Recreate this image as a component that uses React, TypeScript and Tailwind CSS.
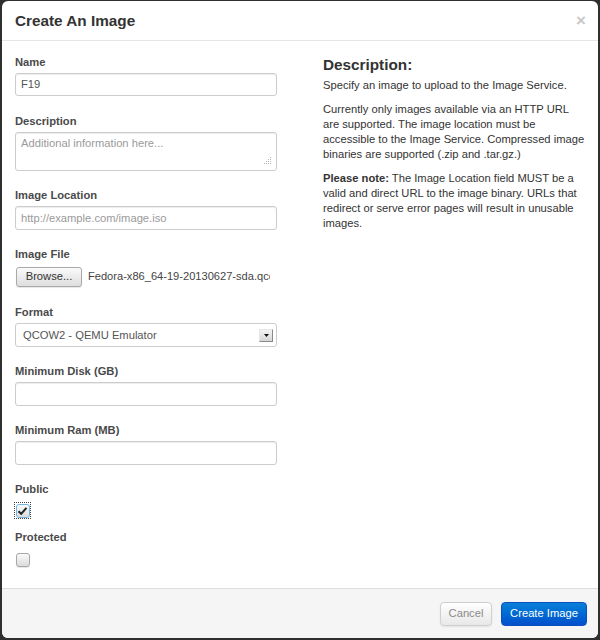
import React from "react";

function Label({ children }: { children: React.ReactNode }) {
  return (
    <div className="text-[11.2px] leading-[15.5px] font-bold text-[#4a4a4a] pt-[1.5px] mb-[2.5px]">
      {children}
    </div>
  );
}

function Input({ value, placeholder }: { value?: string; placeholder?: string }) {
  return (
    <div className="h-[23.5px] w-[262px] border border-[#cccccc] rounded-[3px] bg-white shadow-[inset_0_1px_1px_rgba(0,0,0,0.075)] flex items-center pl-[5px] text-[11.2px]">
      {value ? (
        <span className="text-[#555]">{value}</span>
      ) : placeholder ? (
        <span className="text-[#9a9a9a]">{placeholder}</span>
      ) : null}
    </div>
  );
}

export default function App() {
  return (
    <div className="w-[600px] h-[640px] bg-[#2f2f2f] pt-[1px] px-[2px] pb-[2px] font-['Liberation_Sans',Arial,sans-serif]">
      <div className="h-full flex flex-col bg-white rounded-[6px] overflow-hidden">
        {/* Header */}
        <div className="h-[40px] shrink-0 border-b border-[#e5e5e5] flex items-center justify-between pl-[13px] pr-[12px] pt-[1px]">
          <h3 className="text-[15.3px] leading-[20px] font-bold text-[#333]">Create An Image</h3>
          <span className="text-[17px] font-bold leading-[20px] text-[#c8c8c8]">×</span>
        </div>

        {/* Body */}
        <div className="flex-1 flex pl-[13px] pt-[12.4px]">
          <div className="w-[262px] flex flex-col">
            <Label>Name</Label>
            <Input value="F19" />
            <div className="h-[16px]" />

            <Label>Description</Label>
            <div className="relative h-[39px] w-[262px] border border-[#cccccc] rounded-[3px] bg-white shadow-[inset_0_1px_1px_rgba(0,0,0,0.075)] pl-[5px] pt-[3px] text-[11.2px] leading-[15px]">
              <span className="text-[#9a9a9a]">Additional information here...</span>
              <svg className="absolute right-[4px] bottom-[4px]" width="9" height="9" viewBox="0 0 9 9">
                <g fill="#b5b5b5">
                  <rect x="7" y="0" width="1" height="1" />
                  <rect x="7" y="2" width="1" height="1" />
                  <rect x="5" y="2" width="1" height="1" />
                  <rect x="7" y="4" width="1" height="1" />
                  <rect x="5" y="4" width="1" height="1" />
                  <rect x="3" y="4" width="1" height="1" />
                  <rect x="7" y="6" width="1" height="1" />
                  <rect x="5" y="6" width="1" height="1" />
                  <rect x="3" y="6" width="1" height="1" />
                  <rect x="1" y="6" width="1" height="1" />
                </g>
              </svg>
            </div>
            <div className="h-[16px]" />

            <Label>Image Location</Label>
            <Input placeholder="http://example.com/image.iso" />
            <div className="h-[16px]" />

            <Label>Image File</Label>
            <div className="h-[22.5px] flex items-center">
              <div className="ml-[1px] h-[20px] w-[66px] border border-[#a9a9a9] rounded-[3px] bg-linear-to-b from-[#fafafa] to-[#dedede] shadow-[0_1px_1px_rgba(0,0,0,0.1)] flex items-center justify-center text-[11.2px] text-[#333]">
                Browse...
              </div>
              <div className="ml-[6px] w-[182px] overflow-hidden whitespace-nowrap text-[11.1px] text-[#444]">
                Fedora-x86_64-19-20130627-sda.qcow2
              </div>
            </div>
            <div className="h-[16px]" />

            <Label>Format</Label>
            <div className="h-[23.5px] w-[262px] border border-[#cccccc] rounded-[3px] bg-white flex items-center justify-between pl-[7px] pr-[3px] text-[11.2px]">
              <span className="text-[#555]">QCOW2 - QEMU Emulator</span>
              <div className="h-[13px] w-[14px] bg-linear-to-b from-[#f4f4f4] to-[#d6d6d6] border-r border-b border-[#8a8a8a] border-l border-t border-l-[#e6e6e6] border-t-[#e6e6e6] flex items-center justify-center">
                <svg width="5" height="3" viewBox="0 0 5 3">
                  <path d="M0 0 H5 L2.5 3 Z" fill="#111" />
                </svg>
              </div>
            </div>
            <div className="h-[16px]" />

            <Label>Minimum Disk (GB)</Label>
            <Input />
            <div className="h-[16px]" />

            <Label>Minimum Ram (MB)</Label>
            <Input />
            <div className="h-[16px]" />

            <Label>Public</Label>
            <div className="mt-[2px] ml-[-1px] h-[17px] w-[17px] border border-dotted border-[#444] p-[0.5px]">
              <div className="h-full w-full rounded-[3px] border border-[#6fb3e6] bg-linear-to-b from-[#fafafa] to-[#dcdcdc] flex items-center justify-center">
                <svg width="11" height="10" viewBox="0 0 11 10">
                  <path d="M1.5 5.2 L4.2 7.8 L9.5 1.8" fill="none" stroke="#222" strokeWidth="2" />
                </svg>
              </div>
            </div>

            <div className="mt-[9.5px]">
              <Label>Protected</Label>
            </div>
            <div className="mt-[5px] ml-[1px] h-[14px] w-[14px] rounded-[3px] border border-[#a8a8a8] bg-linear-to-b from-[#fafafa] to-[#dcdcdc] shadow-[0_1px_1px_rgba(0,0,0,0.1)]" />
          </div>

          <div className="ml-[46px] w-[270px] pt-[3px] text-[#333] whitespace-nowrap">
            <h3 className="text-[15.3px] leading-[17px] font-bold mb-[4.8px]">Description:</h3>
            <p className="text-[11.2px] leading-[15px] mb-[9px]">
              Specify an image to upload to the Image Service.
            </p>
            <p className="text-[11.2px] leading-[15px] mb-[8.6px]">
              Currently only images available via an HTTP URL
              <br />
              are supported. The image location must be
              <br />
              accessible to the Image Service. Compressed image
              <br />
              binaries are supported (.zip and .tar.gz.)
            </p>
            <p className="text-[11.2px] leading-[15px]">
              <strong>Please note:</strong> The Image Location field MUST be a
              <br />
              valid and direct URL to the image binary. URLs that
              <br />
              redirect or serve error pages will result in unusable
              <br />
              images.
            </p>
          </div>
        </div>

        {/* Footer */}
        <div className="h-[50px] shrink-0 border-t border-[#dddddd] bg-[#f5f5f5] flex justify-end items-start pt-[12.5px] pr-[11px] gap-[9px]">
          <div className="h-[24px] w-[52px] border border-[#cfcfcf] rounded-[4px] bg-linear-to-b from-[#ffffff] to-[#e8e8e8] shadow-[0_1px_2px_rgba(0,0,0,0.08)] flex items-center justify-center text-[11.2px] text-[#8a8a8a]">
            Cancel
          </div>
          <div className="h-[24px] w-[86px] border border-[#0a4fc0] rounded-[4px] bg-linear-to-b from-[#0a80d8] to-[#0350cc] flex items-center justify-center text-[11.2px] text-white">
            Create Image
          </div>
        </div>
      </div>
    </div>
  );
}
